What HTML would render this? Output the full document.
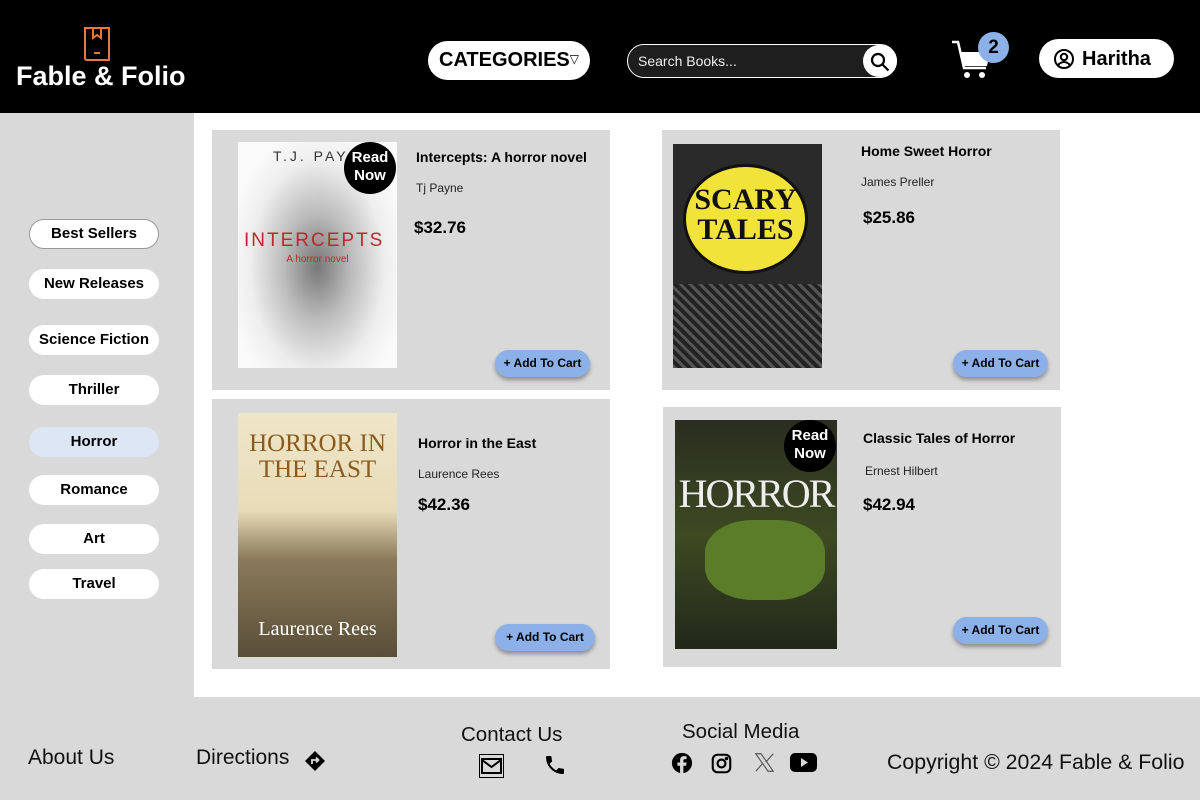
<!DOCTYPE html>
<html><head><meta charset="utf-8"><style>
*{margin:0;padding:0;box-sizing:border-box}
body{width:1200px;height:800px;position:relative;font-family:"Liberation Sans",sans-serif;background:#fff;overflow:hidden}
.a{position:absolute}
.hdr{left:0;top:0;width:1200px;height:113px;background:#000}
.side{left:0;top:113px;width:194px;height:584px;background:#d9d9d9}
.foot{left:0;top:697px;width:1200px;height:103px;background:#d9d9d9}
.sb{position:absolute;left:29px;width:130px;height:30px;background:#fff;border-radius:15px;font-weight:bold;font-size:15px;text-align:center;line-height:30px;color:#000}
.card{position:absolute;background:#d9d9d9}
.t{position:absolute;font-weight:bold;font-size:14px}
.au{position:absolute;font-size:12px;color:#222}
.pr{position:absolute;font-weight:bold;font-size:17px}
.btn{position:absolute;width:95px;height:27px;background:#8cb1e8;border-radius:14px;font-weight:bold;font-size:12px;text-align:center;line-height:27px;box-shadow:0 3px 4px rgba(0,0,0,.35)}
.rn{position:absolute;width:52px;height:52px;border-radius:50%;background:#000;color:#fff;font-weight:bold;font-size:15px;text-align:center;line-height:18px;padding-top:7px}
.fl{position:absolute;font-size:20px;color:#111}
</style></head><body>
<div class="a hdr"></div>
<svg class="a" style="left:82px;top:25px" width="30" height="38" viewBox="0 0 30 38" fill="none" stroke="#e8773f" stroke-width="2"><path d="M3 3h24v32H5q-2 0-2-2z"/><path d="M11 3v10l4-3 4 3V3"/><path d="M12 28h6"/></svg>
<div class="a" style="left:16px;top:61px;color:#fff;font-size:27px;font-weight:bold">Fable &amp; Folio</div>
<div class="a" style="left:428px;top:41px;width:162px;height:39px;background:#fff;border-radius:20px;font-weight:bold;font-size:20px;line-height:39px;padding-left:11px">CATEGORIES<span style="font-size:12px;font-weight:normal;position:relative;top:-3px">▽</span></div>
<div class="a" style="left:627px;top:44px;width:270px;height:34px;background:#1e1e1e;border:1px solid #fff;border-radius:17px;color:#eee;font-size:14px;line-height:32px;padding-left:10px">Search Books...</div>
<div class="a" style="left:863px;top:45px;width:34px;height:32px;background:#fff;border-radius:16px"></div>
<svg class="a" style="left:869px;top:51px" width="22" height="22" viewBox="0 0 22 22" fill="none" stroke="#000" stroke-width="2.2"><circle cx="9" cy="9" r="6"/><path d="M13.5 13.5l6 6"/></svg>
<svg class="a" style="left:950px;top:40px" width="45" height="38" viewBox="0 0 45 38" fill="#fff"><path d="M2 2h6l6 26h22" fill="none" stroke="#fff" stroke-width="2.5"/><path d="M11 12h29l-3 14H14z"/><circle cx="17" cy="35" r="3"/><circle cx="32" cy="35" r="3"/></svg>
<div class="a" style="left:978px;top:32px;width:31px;height:31px;border-radius:50%;background:#8cb1e8;font-size:19px;font-weight:bold;text-align:center;line-height:31px">2</div>
<div class="a" style="left:1039px;top:39px;width:135px;height:39px;background:#fff;border-radius:20px;font-weight:bold;font-size:20px;line-height:40px;padding-left:43px">Haritha</div>
<svg class="a" style="left:1053px;top:48px" width="22" height="22" viewBox="0 0 22 22" fill="none" stroke="#000" stroke-width="2"><circle cx="11" cy="11" r="9"/><circle cx="11" cy="9" r="3.2"/><path d="M5 17q6-6 12 0"/></svg>

<div class="a side"></div>
<div class="sb" style="top:219px;border:1px solid #999;line-height:28px">Best Sellers</div>
<div class="sb" style="top:269px">New Releases</div>
<div class="sb" style="top:325px">Science Fiction</div>
<div class="sb" style="top:375px">Thriller</div>
<div class="sb" style="top:427px;background:#dde6f5">Horror</div>
<div class="sb" style="top:475px">Romance</div>
<div class="sb" style="top:524px">Art</div>
<div class="sb" style="top:569px">Travel</div>

<div class="card" style="left:212px;top:130px;width:398px;height:260px"></div>
<div class="a" style="left:238px;top:142px;width:159px;height:226px;background:radial-gradient(ellipse at 50% 55%,#777 0,#bbb 30%,#eee 60%,#fafafa 80%);overflow:hidden">
<div class="a" style="left:35px;top:6px;font-size:14px;letter-spacing:3px;color:#333">T.J. PAYNE</div>
<div class="a" style="left:6px;top:88px;font-size:19px;letter-spacing:2px;color:#c0262b">INTERCEPTS</div>
<div class="a" style="left:0;width:159px;text-align:center;top:112px;font-size:10px;color:#c0262b">A horror novel</div>
</div>
<div class="rn" style="left:344px;top:142px">Read<br>Now</div>
<div class="t" style="left:416px;top:149px">Intercepts: A horror novel</div>
<div class="au" style="left:416px;top:181px">Tj Payne</div>
<div class="pr" style="left:414px;top:218px">$32.76</div>
<div class="btn" style="left:495px;top:350px">+ Add To Cart</div>

<div class="card" style="left:662px;top:130px;width:398px;height:260px"></div>
<div class="a" style="left:673px;top:144px;width:149px;height:224px;background:#2a2a2a;overflow:hidden">
<div class="a" style="left:10px;top:20px;width:125px;height:110px;border-radius:50%;background:#f2e33a;border:3px solid #111;text-align:center;font-family:'Liberation Serif',serif;font-weight:bold;font-size:30px;line-height:30px;padding-top:18px;color:#111">SCARY<br>TALES</div>
<div class="a" style="left:0;top:140px;width:149px;height:84px;background:repeating-linear-gradient(45deg,#555 0 3px,#222 3px 7px)"></div>
</div>
<div class="t" style="left:861px;top:143px">Home Sweet Horror</div>
<div class="au" style="left:861px;top:175px">James Preller</div>
<div class="pr" style="left:863px;top:208px">$25.86</div>
<div class="btn" style="left:953px;top:350px">+ Add To Cart</div>

<div class="card" style="left:212px;top:399px;width:398px;height:270px"></div>
<div class="a" style="left:238px;top:413px;width:159px;height:244px;background:linear-gradient(#efe6c8 0,#e8dcb8 40%,#8a7a5a 60%,#5a4e38 100%);overflow:hidden">
<div class="a" style="left:0;top:18px;width:159px;text-align:center;font-family:'Liberation Serif',serif;font-size:25px;line-height:26px;color:#8a5a1e">HORROR IN<br>THE EAST</div>
<div class="a" style="left:0;top:205px;width:159px;text-align:center;font-family:'Liberation Serif',serif;font-size:20px;color:#fff">Laurence Rees</div>
</div>
<div class="t" style="left:418px;top:435px">Horror in the East</div>
<div class="au" style="left:418px;top:467px">Laurence Rees</div>
<div class="pr" style="left:418px;top:495px">$42.36</div>
<div class="btn" style="left:495px;top:624px;width:100px">+ Add To Cart</div>

<div class="card" style="left:663px;top:407px;width:398px;height:260px"></div>
<div class="a" style="left:675px;top:420px;width:162px;height:229px;background:linear-gradient(#2a2d20,#3d4a22 50%,#22281a);overflow:hidden">
<div class="a" style="left:0;top:50px;width:162px;text-align:center;font-family:'Liberation Serif',serif;font-size:40px;color:#eee;letter-spacing:-2px">HORROR</div>
<div class="a" style="left:30px;top:100px;width:120px;height:80px;border-radius:40%;background:#5b7d2a"></div>
</div>
<div class="rn" style="left:784px;top:420px">Read<br>Now</div>
<div class="t" style="left:863px;top:430px">Classic Tales of Horror</div>
<div class="au" style="left:865px;top:464px">Ernest Hilbert</div>
<div class="pr" style="left:863px;top:495px">$42.94</div>
<div class="btn" style="left:953px;top:617px">+ Add To Cart</div>

<div class="a foot"></div>
<div class="fl" style="left:28px;top:746px;font-size:21px">About Us</div>
<div class="fl" style="left:196px;top:746px;font-size:21px">Directions</div>
<svg class="a" style="left:304px;top:750px" width="22" height="22" viewBox="0 0 22 22"><path d="M11 1l10 10-10 10L1 11z" fill="#000"/><path d="M8 14v-4h6M12 7.5l2.5 2.5-2.5 2.5" stroke="#d9d9d9" stroke-width="1.8" fill="none"/></svg>
<div class="fl" style="left:461px;top:723px;font-size:20.5px">Contact Us</div>
<svg class="a" style="left:479px;top:754px" width="25" height="24" viewBox="0 0 25 24" fill="none" stroke="#000"><rect x=".5" y=".5" width="24" height="23"/><rect x="3" y="5" width="19" height="14" stroke-width="2"/><path d="M3 6l9.5 7L22 6" stroke-width="2"/></svg>
<svg class="a" style="left:543px;top:753px" width="24" height="24" viewBox="0 0 24 24"><path d="M6.6 10.8c1.4 2.8 3.8 5.1 6.6 6.6l2.2-2.2c.3-.3.7-.4 1-.2 1.1.4 2.3.6 3.6.6.6 0 1 .4 1 1V20c0 .6-.4 1-1 1C10.6 21 3 13.4 3 4c0-.6.4-1 1-1h3.5c.6 0 1 .4 1 1 0 1.3.2 2.5.6 3.6.1.3 0 .7-.2 1z"/></svg>
<div class="fl" style="left:682px;top:720px;font-size:20.5px">Social Media</div>
<svg class="a" style="left:671px;top:752px" width="22" height="22" viewBox="0 0 24 24"><circle cx="12" cy="12" r="11"/><path d="M13.5 24v-9h3l.5-3.5h-3.5V9.5c0-1 .3-1.7 1.8-1.7H17V4.7c-.3 0-1.4-.2-2.7-.2-2.7 0-4.4 1.6-4.4 4.6v2.4H7V15h2.9v9z" fill="#d9d9d9"/></svg>
<svg class="a" style="left:711px;top:753px" width="21" height="21" viewBox="0 0 24 24" fill="none" stroke="#000" stroke-width="2.4"><rect x="2" y="2" width="20" height="20" rx="5.5"/><circle cx="12" cy="12" r="4.5"/><circle cx="17.7" cy="6.3" r=".8" fill="#000"/></svg>
<svg class="a" style="left:754px;top:752px" width="21" height="21" viewBox="0 0 24 24" fill="none" stroke="#555" stroke-width="1.3"><path d="M2 2h6l14 20h-6zM22 2l-8.5 9.5M2 22l8.5-9.5"/></svg>
<svg class="a" style="left:790px;top:753px" width="27" height="19" viewBox="0 0 27 19"><rect x="0" y="0" width="27" height="19" rx="5"/><path d="M11 5l7 4.5-7 4.5z" fill="#d9d9d9"/></svg>
<div class="fl" style="left:887px;top:750px;font-size:21.3px">Copyright © 2024 Fable &amp; Folio</div>
</body></html>
